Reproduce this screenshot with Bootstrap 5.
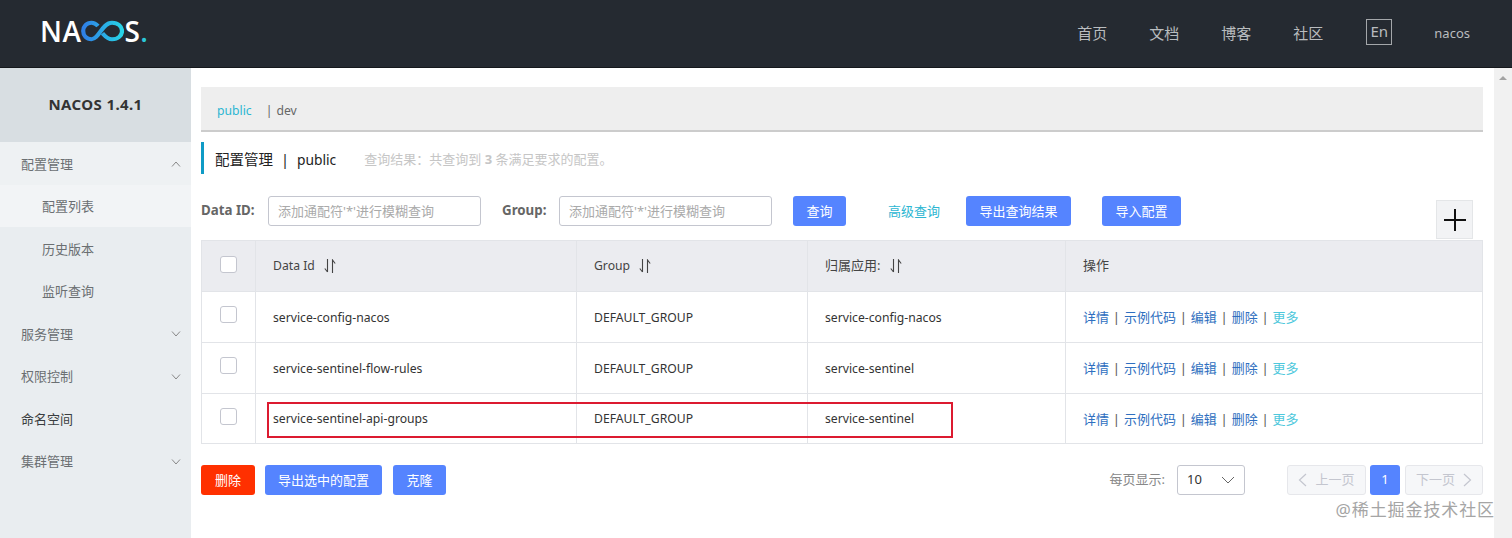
<!DOCTYPE html>
<html lang="zh-CN">
<head>
    <meta charset="UTF-8">
    <meta name="viewport" content="width=device-width, initial-scale=1.0">
    <title>Nacos - 配置管理</title>
    <link href="https://cdn.jsdelivr.net/npm/bootstrap@5.3.0/dist/css/bootstrap.min.css" rel="stylesheet">
    <style>
        html, body {
            height: 538px;
            overflow: hidden;
        }
        body {
            font-family: "Noto Sans", "Noto Sans CJK SC", sans-serif;
            font-size: 13px;
            color: #333;
            background: #fff;
        }
        .top-bar {
            height: 68px;
            background: #252a31;
            border-bottom: 1px solid #15181c;
            padding: 0 42px 0 40px;
        }
        .brand-logo {
            font-family: "Open Sans", sans-serif;
            font-size: 28px;
            font-weight: 600;
            color: #fff;
            line-height: 1;
            margin-top: -6px;
            letter-spacing: 0.5px;
        }
        .brand-dot {
            color: #2bc6d8;
        }
        .top-link {
            font-size: 15px;
            color: #b9bcbf;
            margin-right: 42px;
        }
        .lang-box {
            width: 26px;
            height: 26px;
            border: 1px solid #a4a7aa;
            color: #b9bcbf;
            font-size: 15px;
            line-height: 22px;
            text-align: center;
            margin: -3px 42px 0 1px;
        }
        .user-name {
            font-size: 13px;
            color: #b9bcbf;
        }
        .page-body {
            height: 470px;
        }
        .side-menu {
            width: 191px;
            flex: none;
            background: #e9edf0;
        }
        .side-title {
            height: 74px;
            background: #d8dee2;
            font-size: 15px;
            font-weight: 700;
            color: #333;
            letter-spacing: 0.4px;
            padding-bottom: 1px;
        }
        .menu-row {
            height: 42.5px;
            padding: 2px 10px 0 21px;
            color: #6b6f72;
        }
        .menu-row.is-open {
            background: #eef1f3;
        }
        .menu-row.is-plain {
            color: #3a3d40;
        }
        .menu-sub {
            height: 42.5px;
            padding: 2px 0 0 42px;
            color: #6b6f72;
        }
        .menu-sub.is-current {
            background: #f2f4f6;
        }
        .main-area {
            flex: 1;
            min-width: 0;
            padding: 19px 11px 0 10px;
        }
        .tab-strip {
            height: 45px;
            background: #eee;
            border-bottom: 2px solid #ccc;
            padding: 6px 0 0 16px;
            color: #666;
            font-size: 12.2px;
        }
        .tab-active {
            color: #2cb6d2;
            margin-right: 14px;
        }
        .tab-sep {
            margin-right: 4px;
        }
        .title-line {
            height: 32px;
            margin-top: 10px;
            border-left: 3px solid #0f9bc6;
            padding: 3px 0 0 11px;
        }
        .title-main {
            font-size: 14.5px;
            color: #222;
        }
        .title-latin {
            font-size: 13.8px;
        }
        .title-sep {
            margin: 0 8px;
        }
        .title-note {
            color: #c6c6c6;
            font-size: 13px;
            margin-left: 28px;
        }
        .query-row {
            height: 44px;
            margin-top: 22px;
        }
        .field-label {
            font-weight: 700;
            color: #666;
            font-size: 13.3px;
            height: 29px;
            line-height: 29px;
        }
        .query-input.form-control {
            height: 30px;
            font-size: 13px;
            border-radius: 3px;
            border-color: #c4c6cf;
            padding: 0 9px;
            color: #333;
        }
        .query-input.form-control::placeholder {
            color: #aaa;
        }
        .nacos-btn.btn {
            height: 30px;
            padding: 0 13.5px;
            font-size: 13px;
            line-height: 30px;
            border: 0;
            border-radius: 3px;
            background: #5584ff;
            color: #fff;
        }
        .nacos-btn.btn-del {
            background: #ff3000;
            padding: 0 14px;
        }
        .nacos-btn.btn-tight {
            padding: 0 13px;
        }
        .adv-link {
            color: #2cb6d2;
            text-decoration: none;
        }
        .plus-btn {
            width: 37px;
            height: 39px;
            background: #f2f3f5;
            border: 1px solid #e4e6e8;
            margin: 0 10px 1px auto;
            align-self: flex-end;
        }
        .table-wrap {
            position: relative;
        }
        .config-table.table {
            table-layout: fixed;
            margin: 0;
            color: #333;
            font-size: 12.2px;
            border-color: #dcdee3;
        }
        .config-table.table > :not(caption) > * > * {
            padding: 0 17px;
            vertical-align: middle;
            border: 1px solid #e2e4e8;
            height: 51px;
            box-shadow: none;
        }
        .config-table.table > tbody > tr > td {
            padding-top: 2px;
        }
        .config-table.table > tbody > tr:last-child > td {
            height: 50px;
        }
        .config-table.table > thead > tr > th {
            background: #ebecf0;
            font-weight: 400;
            color: #444;
        }
        .config-table.table > :not(caption) > * > .cjk-cell {
            font-size: 13px;
        }
        .config-table.table > :not(caption) > * > .check-cell {
            padding: 0 1px 3px 0;
            text-align: center;
        }
        .config-table.table > thead > tr > th.check-cell {
            padding-bottom: 1px;
        }
        .config-table .form-check-input {
            width: 17px;
            height: 17px;
            margin: 0;
            border-color: #c4c6cf;
            border-radius: 3px;
        }
        .sort-mark {
            margin-left: 6px;
            vertical-align: -3px;
        }
        .act-link {
            color: #2f6fc0;
            text-decoration: none;
        }
        .act-more {
            color: #4ec8dc;
        }
        .act-sep {
            margin: 0 3.85px;
            color: #555;
        }
        .red-frame {
            position: absolute;
            left: 66px;
            top: 162px;
            width: 686px;
            height: 36px;
            border: 2px solid #dc1a30;
            pointer-events: none;
        }
        .bottom-row {
            margin-top: 21px;
        }
        .page-label {
            color: #888;
            margin-right: 12px;
        }
        .page-size {
            width: 68px;
            height: 30px;
            padding: 0 9px;
            border: 1px solid #c4c6cf;
            border-radius: 3px;
            color: #333;
            margin-right: 42px;
        }
        .page-btn {
            height: 30px;
            width: 79px;
            background: #f6f7f9;
            border: 1px solid #e6e7eb;
            border-radius: 3px;
            color: #c4c6cf;
        }
        .page-btn.is-next {
            width: 78px;
        }
        .page-num {
            width: 30px;
            height: 30px;
            background: #5584ff;
            color: #fff;
            border-radius: 3px;
            margin: 0 5px 0 4px;
        }
        .scroll-rail {
            width: 18px;
            flex: none;
            background: #f1f1f1;
            padding-top: 8px;
        }
        .scroll-up {
            width: 0;
            height: 0;
            margin: 0 auto;
            border-left: 4px solid transparent;
            border-right: 4px solid transparent;
            border-bottom: 4px solid #a3a3a3;
        }
        .mark-text {
            position: absolute;
            right: 17px;
            top: 498px;
            font-size: 17px;
            color: #a5a5a5;
            letter-spacing: 0.9px;
            line-height: 24px;
        }
    </style>
</head>
<body>

<!-- Header -->
<nav class="top-bar d-flex align-items-center">
    <div class="brand-logo d-flex align-items-center">
        <span>NA</span>
        <svg width="43" height="22" viewBox="0 0 43 24" preserveAspectRatio="none" fill="none">
            <defs>
                <linearGradient id="loopColor" x1="0" y1="0" x2="1" y2="0">
                    <stop offset="0" stop-color="#2f7fe6"></stop>
                    <stop offset="1" stop-color="#27d3e6"></stop>
                </linearGradient>
            </defs>
            <path d="M17 6.5C14.8 4 12.8 3 10.5 3C5.6 3 2.2 6.8 2.2 12S5.6 21 10.5 21C18 21 21 3 31 3C37 3 41 7 41 12S37 21 31 21C26.5 21 24 17.5 21.5 14.5" stroke="url(#loopColor)" stroke-width="4.2" stroke-linecap="butt"></path>
        </svg>
        <span>S</span><span class="brand-dot">.</span>
    </div>
    <div class="ms-auto d-flex align-items-center">
        <span class="top-link">首页</span>
        <span class="top-link">文档</span>
        <span class="top-link">博客</span>
        <span class="top-link">社区</span>
        <span class="lang-box">En</span>
        <span class="user-name">nacos</span>
    </div>
</nav>

<div class="page-body d-flex">
    <!-- Sidebar -->
    <aside class="side-menu">
        <div class="side-title d-flex align-items-center justify-content-center">NACOS 1.4.1</div>
        <div class="menu-row is-open d-flex align-items-center justify-content-between">
            <span>配置管理</span>
            <svg width="10" height="6" viewBox="0 0 10 6" fill="none"><path d="M1 5.5L5 1L9 5.5" stroke="#888" stroke-width="1"></path></svg>
        </div>
        <div class="menu-sub is-current d-flex align-items-center">配置列表</div>
        <div class="menu-sub d-flex align-items-center">历史版本</div>
        <div class="menu-sub d-flex align-items-center">监听查询</div>
        <div class="menu-row d-flex align-items-center justify-content-between">
            <span>服务管理</span>
            <svg width="10" height="6" viewBox="0 0 10 6" fill="none"><path d="M1 .5L5 5L9 .5" stroke="#888" stroke-width="1"></path></svg>
        </div>
        <div class="menu-row d-flex align-items-center justify-content-between">
            <span>权限控制</span>
            <svg width="10" height="6" viewBox="0 0 10 6" fill="none"><path d="M1 .5L5 5L9 .5" stroke="#888" stroke-width="1"></path></svg>
        </div>
        <div class="menu-row is-plain d-flex align-items-center">命名空间</div>
        <div class="menu-row d-flex align-items-center justify-content-between">
            <span>集群管理</span>
            <svg width="10" height="6" viewBox="0 0 10 6" fill="none"><path d="M1 .5L5 5L9 .5" stroke="#888" stroke-width="1"></path></svg>
        </div>
    </aside>

    <!-- Main -->
    <main class="main-area">
        <div class="tab-strip d-flex align-items-center">
            <span class="tab-active">public</span>
            <span class="tab-sep">|</span>
            <span>dev</span>
        </div>

        <div class="title-line d-flex align-items-center">
            <span class="title-main">配置管理<span class="title-sep">|</span><span class="title-latin">public</span></span>
            <span class="title-note">查询结果：共查询到 <b>3</b> 条满足要求的配置。</span>
        </div>

        <div class="query-row d-flex align-items-start">
            <span class="field-label" style="width: 67px">Data ID:</span>
            <input class="query-input form-control" style="width: 213px" type="text" placeholder="添加通配符'*'进行模糊查询">
            <span class="field-label" style="width: 57px; margin-left: 21px">Group:</span>
            <input class="query-input form-control" style="width: 213px" type="text" placeholder="添加通配符'*'进行模糊查询">
            <button class="nacos-btn btn" style="margin-left: 21px" type="button">查询</button>
            <a class="adv-link" style="margin-left: 42px; line-height: 30px" href="#">高级查询</a>
            <button class="nacos-btn btn" style="margin-left: 26px" type="button">导出查询结果</button>
            <button class="nacos-btn btn" style="margin-left: 31px" type="button">导入配置</button>
            <div class="plus-btn d-flex align-items-center justify-content-center">
                <svg width="22" height="22" viewBox="0 0 22 22"><path d="M11 0V22M0 11H22" stroke="#111" stroke-width="2"></path></svg>
            </div>
        </div>

        <div class="table-wrap">
            <table class="config-table table">
                <colgroup>
                    <col style="width: 54px">
                    <col style="width: 321px">
                    <col style="width: 231px">
                    <col style="width: 258px">
                    <col>
                </colgroup>
                <thead>
                    <tr>
                        <th class="check-cell"><input class="form-check-input" type="checkbox"></th>
                        <th>Data Id <svg class="sort-mark" width="12" height="14" viewBox="0 0 12 14" fill="none"><path d="M3.5 0V13M3.5 13L.8 9.5M8.5 14V1L11.2 4.5" stroke="#444" stroke-width="1.1"></path></svg></th>
                        <th>Group <svg class="sort-mark" width="12" height="14" viewBox="0 0 12 14" fill="none"><path d="M3.5 0V13M3.5 13L.8 9.5M8.5 14V1L11.2 4.5" stroke="#444" stroke-width="1.1"></path></svg></th>
                        <th class="cjk-cell">归属应用: <svg class="sort-mark" width="12" height="14" viewBox="0 0 12 14" fill="none"><path d="M3.5 0V13M3.5 13L.8 9.5M8.5 14V1L11.2 4.5" stroke="#444" stroke-width="1.1"></path></svg></th>
                        <th class="cjk-cell">操作</th>
                    </tr>
                </thead>
                <tbody>
                    <tr>
                        <td class="check-cell"><input class="form-check-input" type="checkbox"></td>
                        <td>service-config-nacos</td>
                        <td>DEFAULT_GROUP</td>
                        <td>service-config-nacos</td>
                        <td class="cjk-cell"><a class="act-link" href="#">详情</a><span class="act-sep">|</span><a class="act-link" href="#">示例代码</a><span class="act-sep">|</span><a class="act-link" href="#">编辑</a><span class="act-sep">|</span><a class="act-link" href="#">删除</a><span class="act-sep">|</span><a class="act-link act-more" href="#">更多</a></td>
                    </tr>
                    <tr>
                        <td class="check-cell"><input class="form-check-input" type="checkbox"></td>
                        <td>service-sentinel-flow-rules</td>
                        <td>DEFAULT_GROUP</td>
                        <td>service-sentinel</td>
                        <td class="cjk-cell"><a class="act-link" href="#">详情</a><span class="act-sep">|</span><a class="act-link" href="#">示例代码</a><span class="act-sep">|</span><a class="act-link" href="#">编辑</a><span class="act-sep">|</span><a class="act-link" href="#">删除</a><span class="act-sep">|</span><a class="act-link act-more" href="#">更多</a></td>
                    </tr>
                    <tr>
                        <td class="check-cell"><input class="form-check-input" type="checkbox"></td>
                        <td>service-sentinel-api-groups</td>
                        <td>DEFAULT_GROUP</td>
                        <td>service-sentinel</td>
                        <td class="cjk-cell"><a class="act-link" href="#">详情</a><span class="act-sep">|</span><a class="act-link" href="#">示例代码</a><span class="act-sep">|</span><a class="act-link" href="#">编辑</a><span class="act-sep">|</span><a class="act-link" href="#">删除</a><span class="act-sep">|</span><a class="act-link act-more" href="#">更多</a></td>
                    </tr>
                </tbody>
            </table>
            <div class="red-frame"></div>
        </div>

        <div class="bottom-row d-flex align-items-center">
            <button class="nacos-btn btn btn-del" type="button">删除</button>
            <button class="nacos-btn btn btn-tight" style="margin-left: 10px" type="button">导出选中的配置</button>
            <button class="nacos-btn btn" style="margin-left: 11px" type="button">克隆</button>
            <span class="page-label ms-auto">每页显示:</span>
            <div class="page-size d-flex align-items-center justify-content-between">
                <span>10</span>
                <svg width="14" height="8" viewBox="0 0 14 8" fill="none"><path d="M1 1L7 7L13 1" stroke="#666" stroke-width="1"></path></svg>
            </div>
            <div class="page-btn d-flex align-items-center justify-content-center gap-2">
                <svg width="9" height="14" viewBox="0 0 9 14" fill="none"><path d="M8 1L1.5 7L8 13" stroke="#c4c6cf" stroke-width="1.2"></path></svg>
                <span>上一页</span>
            </div>
            <div class="page-num d-flex align-items-center justify-content-center">1</div>
            <div class="page-btn is-next d-flex align-items-center justify-content-center gap-2">
                <span>下一页</span>
                <svg width="9" height="14" viewBox="0 0 9 14" fill="none"><path d="M1 1L7.5 7L1 13" stroke="#c4c6cf" stroke-width="1.2"></path></svg>
            </div>
        </div>
    </main>

    <div class="scroll-rail"><div class="scroll-up"></div></div>
</div>

<div class="mark-text">@稀土掘金技术社区</div>

<script src="https://cdn.jsdelivr.net/npm/bootstrap@5.3.0/dist/js/bootstrap.bundle.min.js"></script>
</body>
</html>
